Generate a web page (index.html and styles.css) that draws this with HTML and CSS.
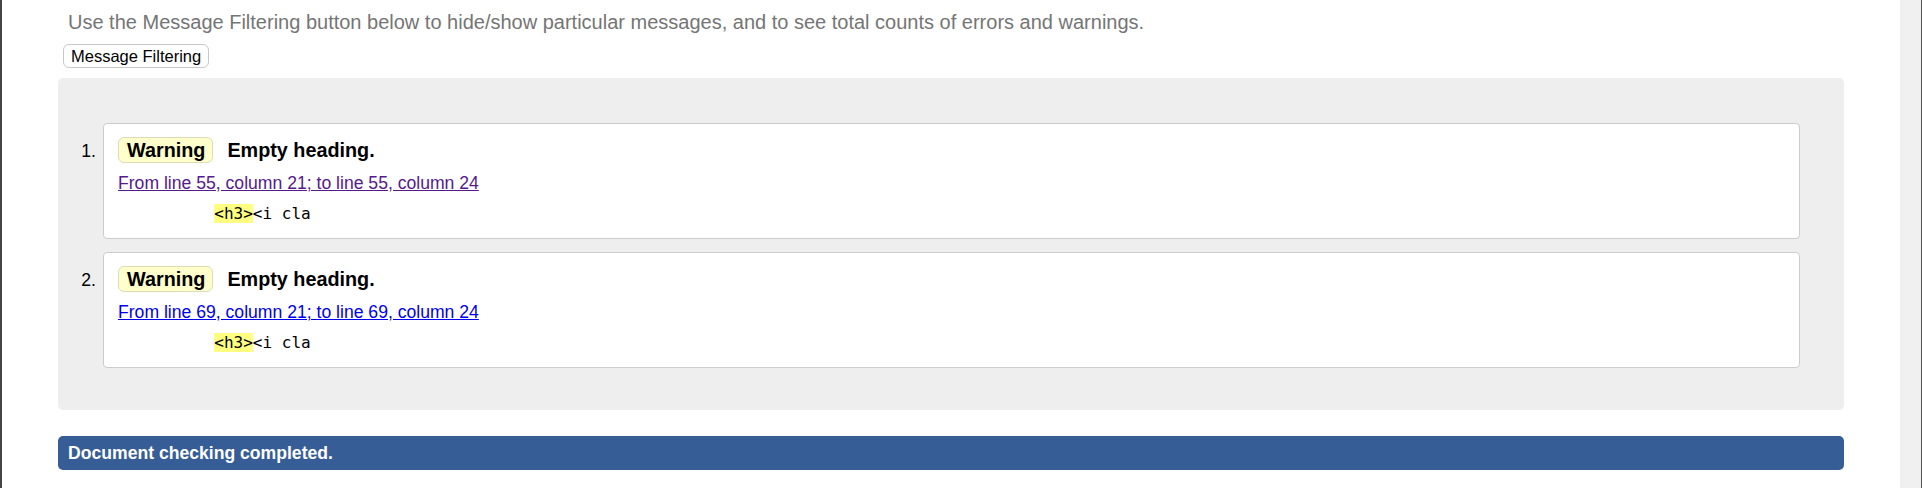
FILE: index.html
```html
<!DOCTYPE html>
<html lang="en">
<head>
<meta charset="utf-8">
<title>Validation results</title>
<link rel="stylesheet" href="styles.css">
</head>
<body>
<div class="frame">
  <div class="edge-left"></div>
  <main class="page">
    <p class="intro">Use the Message Filtering button below to hide/show particular messages, and to see total counts of errors and warnings.</p>
    <button class="filter-btn" type="button">Message Filtering</button>
    <ol class="messages">
      <li class="row">
        <span class="num">1.</span>
        <div class="card">
          <p class="head"><strong class="badge">Warning</strong><span class="title">Empty heading.</span></p>
          <p class="loc"><a class="visited" href="#l55">From line 55, column 21; to line 55, column 24</a></p>
          <p class="extract"><code>          <b class="hl">&lt;h3&gt;</b>&lt;i cla</code></p>
        </div>
      </li>
      <li class="row">
        <span class="num">2.</span>
        <div class="card">
          <p class="head"><strong class="badge">Warning</strong><span class="title">Empty heading.</span></p>
          <p class="loc"><a href="#l69">From line 69, column 21; to line 69, column 24</a></p>
          <p class="extract"><code>          <b class="hl">&lt;h3&gt;</b>&lt;i cla</code></p>
        </div>
      </li>
    </ol>
    <p class="summary">Document checking completed.</p>
  </main>
  <div class="scroll-track"></div>
  <div class="edge-right"></div>
</div>
</body>
</html>
```

FILE: styles.css
```css
html, body {
  margin: 0;
  padding: 0;
  background: #fff;
}

body {
  font-family: "Liberation Sans", Arial, sans-serif;
  color: #000;
}

.frame {
  display: flex;
  width: 1922px;
  height: 488px;
  overflow: hidden;
}

.edge-left {
  width: 2px;
  background: #444;
  flex: none;
}

.edge-right {
  width: 1px;
  background: #555;
  flex: none;
}

.scroll-track {
  width: 21px;
  background: #f0f0f0;
  flex: none;
}

.page {
  flex: 1;
  padding: 0 56px;
  display: flex;
  flex-direction: column;
  align-items: flex-start;
}

.intro {
  margin: 11px 0 0;
  padding-left: 10px;
  font-size: 20px;
  line-height: 22px;
  color: #757575;
}

.filter-btn {
  margin: 11px 0 0 5px;
  height: 24px;
  padding: 0 7px;
  border: 1px solid #c8c8c8;
  border-radius: 6px;
  background: #fff;
  font-family: "Liberation Sans", Arial, sans-serif;
  font-size: 16.5px;
  line-height: 22px;
  color: #000;
}

.messages {
  align-self: stretch;
  list-style: none;
  margin: 10px 0 0;
  padding: 45px 44px 42px 0;
  background: #eee;
  border-radius: 5px;
}

.row {
  display: flex;
  align-items: baseline;
}

.row + .row {
  margin-top: 13px;
}

.num {
  flex: none;
  width: 45px;
  box-sizing: border-box;
  padding-right: 7px;
  text-align: right;
  font-size: 17.6px;
}

.card {
  flex: 1;
  background: #fff;
  border: 1px solid #ccc;
  border-radius: 4px;
  padding: 13px 15px 15px 14px;
}

.head {
  margin: 0;
  display: flex;
  align-items: center;
  height: 26px;
}

.badge {
  display: inline-block;
  box-sizing: border-box;
  height: 26px;
  padding: 0 7px 0 8px;
  border: 1px solid #dcdcb8;
  border-radius: 6px;
  background: #ffc;
  font-size: 19.8px;
  line-height: 24px;
  font-weight: bold;
}

.title {
  margin-left: 14px;
  font-size: 19.8px;
  font-weight: bold;
}

.loc {
  margin: 10px 0 0;
  font-size: 17.6px;
  line-height: 20px;
}

.loc a {
  color: #0000ee;
  text-decoration: underline;
}

.loc a.visited {
  color: #551a8b;
}

.extract {
  margin: 11px 0 0;
  line-height: 19px;
}

.extract code {
  font-family: "DejaVu Sans Mono", monospace;
  font-size: 16px;
  white-space: pre;
}

.hl {
  font-weight: normal;
  background: #ffff80;
}

.summary {
  align-self: stretch;
  margin: 26px 0 0;
  height: 34px;
  padding: 0 10px;
  background: #365d95;
  border-radius: 5px;
  color: #fff;
  font-size: 17.6px;
  font-weight: bold;
  line-height: 34px;
}
```
